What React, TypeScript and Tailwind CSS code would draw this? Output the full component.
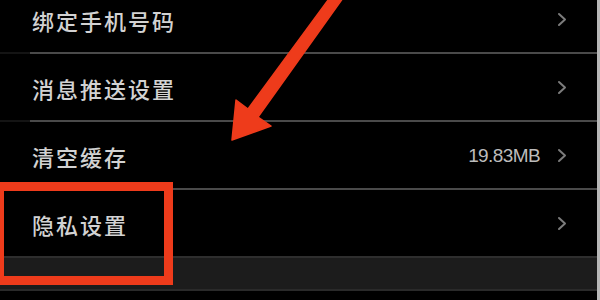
const CJK = { fontFamily: '"Noto Sans CJK SC", "Noto Sans", sans-serif' }

function Chevron() {
  return (
    <svg width="10" height="15" viewBox="0 0 10 15" className="shrink-0" aria-hidden="true">
      <path d="M2 2 L8 7.5 L2 13" fill="none" stroke="#7c7c7c" strokeWidth="2" strokeLinecap="round" strokeLinejoin="round" />
    </svg>
  )
}

function Divider() {
  return (
    <div className="flex h-[2px]">
      <div className="w-[30px] bg-[#141414]" />
      <div className="flex-1 bg-[#4a4a4a]" />
    </div>
  )
}

function Row({ label, value }: { label: string; value?: string }) {
  return (
    <div className="flex h-[66px] items-center pl-[32px] pr-[30px]">
      <span
        className="flex-1 pt-[1px] text-[22px] font-medium leading-none tracking-[2px] text-[#d2d2d2]"
        style={CJK}
      >
        {label}
      </span>
      {value && (
        <span
          className="mr-[17px] text-[19px] leading-none tracking-[-0.6px] text-[#bcbcbc]"
          style={{ fontFamily: '"Liberation Sans", Arial, sans-serif' }}
        >
          {value}
        </span>
      )}
      <Chevron />
    </div>
  )
}

export default function App() {
  return (
    <div className="relative flex h-[300px] w-[600px] overflow-hidden bg-black">
      <div className="flex w-[597px] flex-col">
        <div className="-mt-[14px]">
          <Row label="绑定手机号码" />
          <Divider />
          <Row label="消息推送设置" />
          <Divider />
          <Row label="清空缓存" value="19.83MB" />
          <Divider />
          <Row label="隐私设置" />
          <div className="h-[2px] bg-[#2e2e2e]" />
          <div className="h-[31px] bg-[#1c1c1c]" />
          <div className="h-[2px] bg-[#2a2a2a]" />
        </div>
      </div>
      <div className="w-[3px] bg-[#b8b8b8]" />

      {/* annotation: red frame round the privacy row */}
      <div className="absolute left-[-5px] top-[182px] h-[103px] w-[178px] border-[9px] border-[#ee3b1b]" />

      {/* annotation: red arrow */}
      <svg className="absolute left-0 top-0" width="600" height="300" viewBox="0 0 600 300" aria-hidden="true">
        <polygon
          points="334,-8 343,-2 258,117 271,126 232,140 236,100 248,109"
          fill="#ee3b1b"
          stroke="#ee3b1b"
          strokeWidth="1.5"
          strokeLinejoin="round"
        />
      </svg>
    </div>
  )
}
